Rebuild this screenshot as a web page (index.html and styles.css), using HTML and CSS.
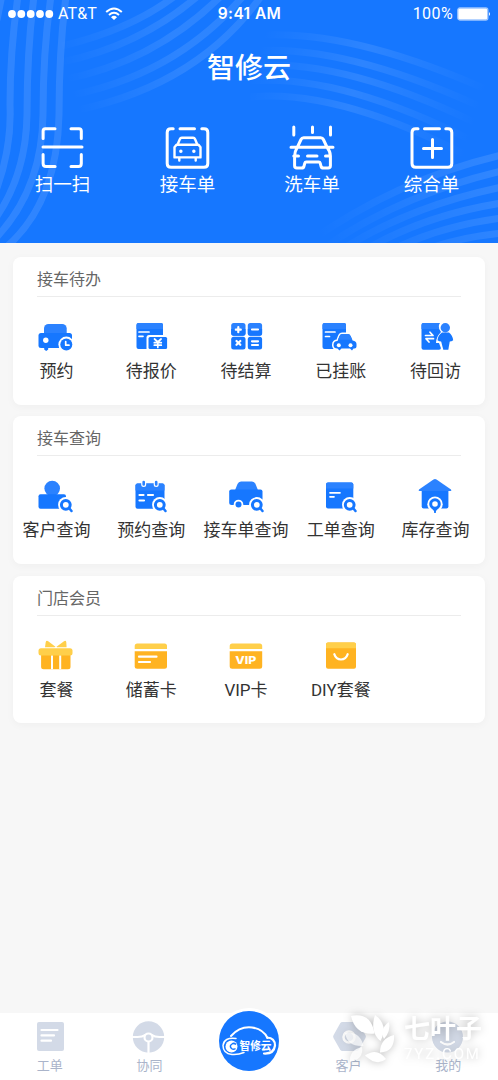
FILE: index.html
```html
<!DOCTYPE html>
<html lang="zh-CN">
<head>
<meta charset="utf-8">
<title>智修云</title>
<link rel="stylesheet" href="styles.css">
</head>
<body>
<div class="app">
  <header class="hero">
    <svg class="waves" viewBox="0 0 498 243" fill="none" stroke-width="7">
      <defs>
        <linearGradient id="fadeA" gradientUnits="userSpaceOnUse" x1="68" y1="85" x2="175" y2="45"><stop offset="0" stop-color="#fff" stop-opacity="0"/><stop offset="1" stop-color="#fff" stop-opacity=".1"/></linearGradient>
        <linearGradient id="fadeB" gradientUnits="userSpaceOnUse" x1="262" y1="40" x2="480" y2="110"><stop offset="0" stop-color="#fff" stop-opacity="0"/><stop offset=".45" stop-color="#fff" stop-opacity=".1"/><stop offset="1" stop-color="#fff" stop-opacity="0"/></linearGradient>
        <linearGradient id="fadeC" gradientUnits="userSpaceOnUse" x1="320" y1="240" x2="490" y2="170"><stop offset="0" stop-color="#fff" stop-opacity="0"/><stop offset="1" stop-color="#fff" stop-opacity=".11"/></linearGradient>
      </defs>
      <g stroke="#fff" stroke-opacity=".11">
        <path d="M2-5Q0 5-3 20"/>
        <path d="M18-4Q10 50 10 105Q12 150-6 196"/>
        <path d="M34-4Q27 50 27 115Q26 175-5 219"/>
        <path d="M51-4Q43 50 43 115Q42 190-5 239"/>
        <path d="M66-4Q59 50 59 115Q57 205 4 249"/>
      </g>
      <g stroke="url(#fadeA)">
        <path d="M175-4Q130 30 62 46"/>
        <path d="M199-5Q140 46 62 62"/>
        <path d="M222-5Q155 62 62 80"/>
        <path d="M244-5Q175 77 62 97"/>
        <path d="M262-5Q195 90 62 113"/>
      </g>
      <g stroke="url(#fadeB)">
        <path d="M250 36Q345 26 490 91"/>
        <path d="M250 51Q345 43 490 111"/>
        <path d="M250 66Q345 57 490 130"/>
        <path d="M250 81Q345 73 490 150"/>
        <path d="M250 97Q345 88 490 168"/>
      </g>
      <g stroke="url(#fadeC)">
        <path d="M305 245Q395 180 502 155"/>
        <path d="M322 249Q400 195 502 171"/>
        <path d="M341 250Q410 206 502 187"/>
        <path d="M365 250Q425 215 502 203"/>
        <path d="M392 250Q440 226 502 218"/>
        <path d="M425 250Q460 237 502 233"/>
      </g>
    </svg>
    <div class="status">
      <div class="carrier">
        <svg width="46" height="10" fill="#fff"><circle cx="4" cy="5" r="3.900"/><circle cx="13.300" cy="5" r="3.900"/><circle cx="22.700" cy="5" r="3.900"/><circle cx="32" cy="5" r="3.900"/><circle cx="41.300" cy="5" r="3.900"/></svg>
        <span class="net">AT&amp;T</span>
        <svg class="wifi" width="18" height="14" viewBox="0 0 18 14" fill="none" stroke="#fff" stroke-width="2"><path d="M1.200 5Q9-2 16.800 5M4 8Q9 3.600 14 8"/><path d="M6 10.200Q9 7.500 12 10.200L9 13z" fill="#fff" stroke="none"/></svg>
      </div>
      <div class="time">9:41 AM</div>
      <div class="power"><span>100%</span>
        <svg width="34" height="14"><rect x=".8" y="1" width="30" height="12" rx="2" fill="#fff" stroke="#9ec6ff" stroke-width="1.300"/><path d="M32 5q2 2 0 4z" fill="#fff"/></svg>
      </div>
    </div>
    <h1 class="title">智修云</h1>
    <div class="actions">
      <div class="action">
        <svg viewBox="38.500 122 48 50"><path d="M42.600 138.500V131q0-2.300 2.300-2.300H54.500M70.500 128.700h8q2.300 0 2.300 2.300v7.500M42.600 154.500v9q0 3 3 3h9M70.500 166.500h7.500q2.800 0 2.800-3v-9M42.500 147H81.500"/></svg>
        <span>扫一扫</span>
      </div>
      <div class="action">
        <svg viewBox="163.500 122 48 50"><path d="M172.700 128.700h-2.200q-3.800 0-3.800 3.800v31q0 3.800 3.800 3.800h33q3.800 0 3.800-3.800v-31q0-3.800-3.800-3.800h-2.200M179.500 128.700h14.500"/><path stroke-width="2.400" class="thin" d="M177 144.700l2.300-5.500q.6-1.500 2-1.500h11.300q1.400 0 2 1.500l2.300 5.500M176 144.700h22l2 2.500v10.200h-26v-10.200zM178.800 157.500v3M195.200 157.500v3"/><path class="dot" d="M180.300 151.300h.1M193.300 151.300h.1"/></svg>
        <span>接车单</span>
      </div>
      <div class="action">
        <svg viewBox="287.500 122 48 50"><path d="M293.300 127v8M312 127v5.500M330 127v8M290.500 147.300H332.500M297 147l3.500-7.500q.8-1.700 2.700-1.700h17q1.900 0 2.700 1.700l3.500 7.500q3.500 4.500 3.500 9v9.800q0 2.300-2.300 2.300h-4.500q-2.200 0-2.600-2l-.8-3q-.3-1.200-1.500-1.200h-12.400q-1.200 0-1.500 1.200l-.8 3q-.4 2-2.600 2h-4.500q-2.300 0-2.300-2.300v-9.800q0-4.500 2.900-9M293.300 156h4.700M307 156h9.500M325 156h4.700"/></svg>
        <span>洗车单</span>
      </div>
      <div class="action">
        <svg viewBox="407.500 122 48 50"><path d="M417.500 128.700h-2.200q-3.800 0-3.800 3.800v31q0 3.800 3.800 3.800h32.200q3.800 0 3.800-3.800v-31q0-3.800-3.800-3.800h-2.200M424 128.700h15M432 139.500v18M423 148.500h18"/></svg>
        <span>综合单</span>
      </div>
    </div>
  </header>

  <main class="cards">
    <section class="card">
      <h2 class="card-title">接车待办</h2>
      <div class="grid">
        <div class="item">
          <svg viewBox="34.500 317 44 40"><rect class="b2" x="44.500" y="324" width="22.700" height="14" rx="4.500"/><rect class="b1" x="39" y="333" width="33.500" height="15" rx="2.500"/><path class="b1" d="M44.700 347h4v2.500l-2 1.500-2-1.500z"/><circle class="w" cx="46.300" cy="340.300" r="2.700"/><circle class="w" cx="66.800" cy="344.500" r="7.900"/><circle class="b1" cx="66.800" cy="344.500" r="6"/><path class="wl" d="M66.200 341.500v3.700h3.300"/></svg>
          <span>预约</span>
        </div>
        <div class="item">
          <svg viewBox="129.500 317 44 40"><rect class="b1" x="137" y="323" width="26.500" height="26" rx="2"/><path class="b2" d="M137 329v-4q0-2 2-2h22.500q2 0 2 2v4z"/><path class="wl" d="M139.500 332h10M139.500 336.300h4"/><rect class="w" x="147" y="335" width="22" height="16" rx="2.500"/><rect class="b1" x="149" y="337" width="18.600" height="12" rx="1.500"/><path class="wl" d="M155 339l3.300 3 3.300-3M158.300 342v5.500M154.800 342.700h7M154.800 345.200h7"/></svg>
          <span>待报价</span>
        </div>
        <div class="item">
          <svg viewBox="224.500 317 44 40"><rect class="b2" x="231.700" y="323" width="14.300" height="12.700" rx="2.500"/><rect class="b2" x="248.300" y="323" width="14.300" height="12.700" rx="2.500"/><rect class="b1" x="231.700" y="336.700" width="14.300" height="12.700" rx="2.500"/><rect class="b1" x="248.300" y="336.700" width="14.300" height="12.700" rx="2.500"/><path class="b1" d="M231.700 329h14.300v4q0 2.700-2.500 2.700h-9.300q-2.500 0-2.500-2.700zM248.300 329h14.300v4q0 2.700-2.500 2.700h-9.300q-2.500 0-2.500-2.700z"/><path class="wl bold" d="M236.300 329.700h5M238.800 327.200v5M252.500 329.500h6M237 341l3.800 3.800M240.800 341l-3.800 3.800M252.500 341.300h6M252.500 345h6"/></svg>
          <span>待结算</span>
        </div>
        <div class="item">
          <svg viewBox="319 317 44 40"><rect class="b1" x="322.500" y="323" width="23.500" height="26" rx="2"/><path class="b2" d="M322.500 329v-4q0-2 2-2h19.500q2 0 2 2v4z"/><path class="wl" d="M325.500 332h9.500M325.500 336.500h4"/><path d="M337.500 341l2-5q.8-2 2.800-2h5.500q2 0 2.800 2l2 4.500q3.900.5 3.900 3.500v2.500q0 2-2 2h-1l-1.500 2-2-2h-8.500l-2 2-2-2q-4 0-4-3.500 0-4 4-4z" fill="#1677ff" stroke="#fff" stroke-width="3" paint-order="stroke"/><path class="b2" d="M339.500 336q.8-2 2.800-2h5.500q2 0 2.800 2l1.600 3.800h-14.200z"/><circle class="w" cx="338.800" cy="345.300" r="2"/><circle class="w" cx="350.500" cy="345.300" r="2"/></svg>
          <span>已挂账</span>
        </div>
        <div class="item">
          <svg viewBox="414 317 44 40"><rect class="b1" x="421.500" y="323" width="19.500" height="26.700" rx="2"/><path class="b2" d="M421.500 329v-4q0-2 2-2h16.500v6z"/><path class="w" d="M442 321q-6 5-1 11-5 5-5 11h3l3 8h2v-30z"/><path class="b1" d="M440.800 340h9.200l-1.700 9.700h-5z"/><circle class="b2" cx="445.300" cy="327.700" r="4.700"/><path class="b1" d="M442 332.500h7q3.500 2.500 4.200 7.700-1.500 1.200-3.700 1.200h-8q-2.500 0-4-1.200.5-5 4.500-7.700z"/><path class="wl" d="M425.500 335.500h7.500l-3-3.300M433.500 338.700h-7.500l3 3.300"/></svg>
          <span>待回访</span>
        </div>
      </div>
    </section>

    <section class="card">
      <h2 class="card-title">接车查询</h2>
      <div class="grid">
        <div class="item">
          <svg viewBox="34.500 476.500 44 40"><circle class="b2" cx="52.700" cy="489" r="7.800"/><rect class="b1" x="39" y="494.700" width="27.500" height="14.600" rx="2"/><circle class="w" cx="66.300" cy="505.300" r="7.700"/><path class="mag" d="M69.500 508.500l2.500 3"/><circle class="ring" cx="66.300" cy="505.300" r="4.400"/></svg>
          <span>客户查询</span>
        </div>
        <div class="item">
          <svg viewBox="129.500 476.500 44 40"><rect class="b1" x="136" y="484" width="29" height="25.300" rx="2"/><path class="b2" d="M136 491v-5q0-2 2-2h25q2 0 2 2v5z"/><path stroke="#fff" stroke-width="5" stroke-linecap="round" d="M144.200 482.500v2.500M156.700 482.500v2.500"/><path stroke="#2b82ff" stroke-width="2.600" stroke-linecap="round" d="M144.200 482.500v2.500M156.700 482.500v2.500"/><path class="wl bold" d="M140 495.500h4M148.500 495.500h5M140 501h4.500"/><circle class="w" cx="160.300" cy="505.300" r="7.700"/><path class="mag" d="M163.500 508.500l2.500 3"/><circle class="ring" cx="160.300" cy="505.300" r="4.400"/></svg>
          <span>预约查询</span>
        </div>
        <div class="item">
          <svg viewBox="224.500 476.500 44 40"><path class="b2" d="M235 492l3-7.500q1-2.500 3.500-2.500h11q2.500 0 3.500 2.500l3 7.500z"/><path class="b1" d="M232 490h29q2 0 2 2v12q0 1.500-1.500 1.500h-29.500q-2.300 0-2.300-2v-11.500q0-2 2.300-2z"/><circle class="w" cx="239" cy="505" r="4.800"/><circle class="b1" cx="239" cy="505" r="3"/><circle class="w" cx="257.300" cy="505.300" r="7.700"/><path class="mag" d="M260.500 508.500l2.500 3"/><circle class="ring" cx="257.300" cy="505.300" r="4.400"/></svg>
          <span>接车单查询</span>
        </div>
        <div class="item">
          <svg viewBox="319 476.500 44 40"><rect class="b1" x="326" y="483" width="27.300" height="26" rx="2"/><path class="b2" d="M326 489v-4q0-2 2-2h23.300q2 0 2 2v4z"/><path class="wl" d="M330 493.300h10M330 497.300h4"/><circle class="w" cx="349.700" cy="505.300" r="7.700"/><path class="mag" d="M353 508.500l2.500 3"/><circle class="ring" cx="349.700" cy="505.300" r="4.400"/></svg>
          <span>工单查询</span>
        </div>
        <div class="item">
          <svg viewBox="414 476.500 44 40"><rect class="b1" x="421.700" y="489" width="26.700" height="20" rx="2"/><path class="b2" d="M433.500 480q1.500-1 3 0l14.500 10q1 1.500-.5 1.500h-31q-1.500 0-.5-1.500z"/><circle class="w" cx="435" cy="504.700" r="7.700"/><path class="b1" d="M431 508h8l-3 3.500-.2 2h-1.600l-.2-2z"/><circle class="ring" cx="435" cy="504.500" r="4.300"/></svg>
          <span>库存查询</span>
        </div>
      </div>
    </section>

    <section class="card">
      <h2 class="card-title">门店会员</h2>
      <div class="grid">
        <div class="item">
          <svg viewBox="34.500 635.800 44 40"><path class="y1" d="M41.600 653h29.400v13.500q0 2.500-2.500 2.500h-24.400q-2.500 0-2.500-2.500z"/><path class="w" d="M51.500 655h2v14h-2zM59.700 655h2v14h-2z"/><rect class="y2" x="39" y="648" width="34" height="7.200" rx="2.500"/><path class="y2" d="M45.500 647l.7-5q.5-2 2.500-1l7.300 5.500-1 .5zM57 646.500l7.500-5.500q2-1 2.300 1l.3 5h-9.500z"/></svg>
          <span>套餐</span>
        </div>
        <div class="item">
          <svg viewBox="129.500 635.800 44 40"><path class="y2" d="M135.200 648.700v-3q0-2.500 2.500-2.500h27.300q2.500 0 2.500 2.500v3z"/><path class="y1" d="M135.200 651h32.300v15q0 2.500-2.500 2.500h-27.300q-2.500 0-2.500-2.500z"/><path class="wl bold" d="M139.500 656.500h17.500M139.500 661.800h11"/></svg>
          <span>储蓄卡</span>
        </div>
        <div class="item">
          <svg viewBox="224.500 635.800 44 40"><path class="y2" d="M230.200 648.700v-3q0-2.500 2.500-2.500h27.500q2.500 0 2.500 2.500v3z"/><path class="y1" d="M230.200 651h32.500v15q0 2.500-2.500 2.500h-27.500q-2.500 0-2.500-2.500z"/><text class="vip" x="246.300" y="663.500" textLength="21" lengthAdjust="spacingAndGlyphs">VIP</text></svg>
          <span>VIP卡</span>
        </div>
        <div class="item">
          <svg viewBox="319 635.800 44 40"><rect class="y1" x="326" y="642.300" width="30" height="26.300" rx="2"/><path class="y2" d="M326 648v-3.700q0-2 2-2h26q2 0 2 2v3.700z"/><path class="wl bold" d="M334.300 654q1.700 5.300 6.700 5.300t6.700-5.300"/></svg>
          <span>DIY套餐</span>
        </div>
      </div>
    </section>
  </main>

  <nav class="tabs">
    <div class="tab"><svg viewBox="30 1017 40 40"><rect class="g" x="37" y="1022" width="27" height="29" rx="2"/><path class="wl bold" d="M41.500 1030h16M41.500 1035.400h12.500M41.500 1040.700h9.500"/></svg><span>工单</span></div>
    <div class="tab"><svg viewBox="129 1017 40 40"><circle class="g" cx="148.500" cy="1037" r="15.700"/><path d="M131.500 1037h6q5 0 7.500-2 3.500-1.500 7 0 2.500 2 7.500 2h6M148.500 1040v14" fill="none" stroke="#fff" stroke-width="2.200"/><circle class="g" cx="148.500" cy="1037.500" r="4" stroke="#fff" stroke-width="2.200"/></svg><span>协同</span></div>
    <div class="tab home">
      <svg class="logo" viewBox="216 1008 66 66"><circle cx="249" cy="1041" r="33" fill="#fff"/><circle cx="249" cy="1041" r="30" fill="#1677ff"/>
        <g fill="none" stroke="#fff" stroke-linecap="round"><path stroke-width="2" d="M231 1036q9-10 21-8.500 11 1.500 15.500 10.500"/><path stroke-width="2.200" d="M267 1037.500q8 .5 8 8-1 8.500-11 8"/><path stroke-width="1.500" d="M236 1038.500q-12-1.500-13 7 0 8 9 9 6 .5 12-2"/></g>
        <circle cx="231.500" cy="1046.500" r="6" fill="#fff"/><path d="M236 1044.500q-2-2-4-.5-3 2-.5 4.500 2 1.500 4 0" fill="none" stroke="#1677ff" stroke-width="1.500"/>
        <text class="logo-text" x="255.500" y="1050" textLength="32" lengthAdjust="spacingAndGlyphs">智修云</text></svg>
    </div>
    <div class="tab"><svg viewBox="329 1017 40 40"><path class="g" d="M342.500 1022h14q1.500 0 2.300 1.300l6.700 12q.8 1.300 0 2.600l-6.700 11.800q-.8 1.300-2.300 1.300h-14q-1.500 0-2.300-1.300l-6.700-11.800q-.8-1.300 0-2.600l6.700-12q.8-1.300 2.300-1.300z"/><circle cx="349" cy="1037" r="5.500" fill="none" stroke="#fff" stroke-width="2.500"/></svg><span>客户</span></div>
    <div class="tab"><svg viewBox="428 1017 40 40"><circle class="g" cx="447.500" cy="1037" r="15.500"/><path class="wl bold" d="M441 1042q6.500 5 13 0"/></svg><span>我的</span></div>
  </nav>

  <div class="brand">
    <svg class="leaves" viewBox="338 1008 62 62" fill="#fff">
      <path d="M351 1016q20-4 23.500 17.500-19 2-23.500-17.500z"/>
      <path d="M375 1015q14 10 5.500 26-11-9-5.500-26z"/>
      <path d="M389 1022q2 9-5 17-5-10 5-17z"/>
      <path d="M394 1035q1 17-14 17.500 0-14 14-17.500z"/>
      <path d="M386 1059q-9 8-21-3.500 12-8.500 21 3.500z"/>
      <path d="M345 1033q15-2 18.500 13-16 1-18.500-13z" opacity=".7"/>
      <path d="M350 1062q-1-12 12-15 2 12-12 15z" opacity=".8"/>
    </svg>
    <div class="brand-copy"><strong>七叶子</strong><span>7YZ.COM</span></div>
  </div>
</div>
</body>
</html>
```
FILE: styles.css
```css
* { box-sizing: border-box; }
body {
  margin: 0;
  background: #f7f7f7;
  font-family: Roboto, "Noto Sans CJK SC", sans-serif;
  color: #333;
}
svg { display: block; }
.app {
  position: relative;
  width: 498px;
  height: 1080px;
  display: flex;
  flex-direction: column;
  overflow: hidden;
}
.hero {
  position: relative;
  height: 243px;
  flex: none;
  background: #1677ff;
  color: #fff;
}
.waves { position: absolute; inset: 0; width: 498px; height: 243px; }
.status {
  position: relative;
  display: grid;
  grid-template-columns: 1fr auto 1fr;
  align-items: center;
  height: 28px;
  padding: 0 7px 0 8px;
}
.carrier, .power { display: flex; align-items: center; }
.carrier { gap: 4px; }
.net { font: 400 16px/28px Roboto, sans-serif; letter-spacing: .1px; }
.wifi { margin-left: 4px; }
.power { justify-content: flex-end; gap: 4px; }
.power span { font: 400 16px/28px Roboto, sans-serif; letter-spacing: .4px; }
.time { font: 600 15.500px/28px Inter, sans-serif; letter-spacing: .4px; }
.title {
  position: relative;
  margin: 17px 0 0;
  text-align: center;
  font: 500 28px/42px "Noto Sans CJK SC", sans-serif;
}
.actions {
  position: relative;
  display: grid;
  grid-template-columns: 125px 125px 124px 115px;
  margin-top: 35px;
}
.action {
  display: flex;
  flex-direction: column;
  align-items: center;
  font-size: 18.500px;
  line-height: 26px;
}
.action svg {
  width: 48px;
  height: 50px;
  fill: none;
  stroke: #fff;
  stroke-width: 3;
  stroke-linecap: round;
  stroke-linejoin: round;
}
.action .thin { stroke-width: 2.400; }
.action .dot { stroke-width: 3.400; }
.cards {
  display: flex;
  flex-direction: column;
  gap: 11.800px;
  padding: 14px 13px 0;
  flex: 1;
}
.card {
  height: 147.500px;
  border-radius: 8px;
  background: #fff;
  box-shadow: 0 2px 8px rgba(0, 0, 0, .035);
}
.card-title {
  margin: 0 24px;
  height: 40px;
  border-bottom: 1px solid #ececec;
  color: #666;
  font-weight: 400;
  font-size: 16px;
  line-height: 46px;
}
.grid {
  display: grid;
  grid-template-columns: repeat(5, 94.800px);
  margin: 20px 0 0 -4px;
}
.item {
  display: flex;
  flex-direction: column;
  align-items: center;
  white-space: nowrap;
  font-size: 17px;
  line-height: 28px;
}
.item svg { width: 44px; height: 40px; }
.b1 { fill: #1677ff; }
.b2 { fill: #2b82ff; }
.y1 { fill: #ffb321; }
.y2 { fill: #ffcf4a; }
.g { fill: #d3dae7; }
.w { fill: #fff; }
.wl { fill: none; stroke: #fff; stroke-width: 1.700; stroke-linecap: round; stroke-linejoin: round; }
.bold { stroke-width: 2.200; }
.ring { fill: #fff; stroke: #1677ff; stroke-width: 3; }
.mag { stroke: #1677ff; stroke-width: 2.500; stroke-linecap: round; }
.vip { fill: #fff; font: 800 10px Inter, sans-serif; text-anchor: middle; }
.tabs {
  display: grid;
  grid-template-columns: repeat(5, 1fr);
  height: 67px;
  flex: none;
  padding-top: 4px;
  background: #fff;
}
.tab {
  display: flex;
  flex-direction: column;
  align-items: center;
  color: #aab4ca;
  font-size: 13px;
  line-height: 18px;
}
.tab > svg { width: 40px; height: 40px; }
.tab > .logo { width: 66px; height: 66px; margin-top: -9px; flex: none; }
.logo-text { fill: #fff; font: 700 11px "Noto Sans CJK SC", sans-serif; text-anchor: middle; }
.brand {
  position: absolute;
  left: 338px;
  top: 1008px;
  display: flex;
  gap: 4px;
  color: #fff;
  filter: drop-shadow(0 0 4px rgba(0, 0, 0, .25));
}
.leaves { width: 62px; height: 62px; }
.brand-copy { display: flex; flex-direction: column; padding-top: 1px; }
.brand-copy strong { font: 700 26px/36px "Noto Sans CJK SC", sans-serif; }
.brand-copy span { font: 400 15px/18px Roboto, sans-serif; letter-spacing: 1.900px; }
```
